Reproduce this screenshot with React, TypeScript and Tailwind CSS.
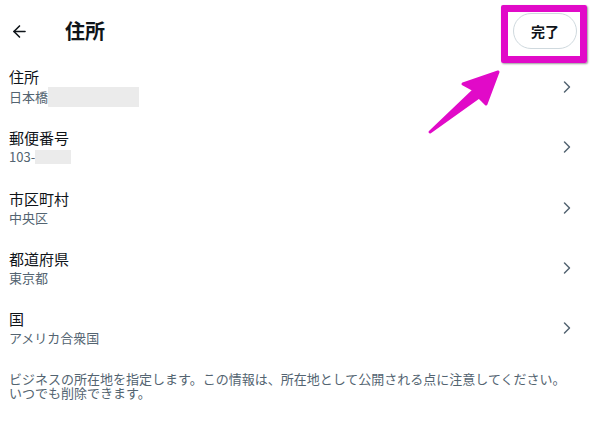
import { ArrowLeft, ChevronRight } from 'lucide-react'

const ROWS: { label: string; value: string; mask?: string }[] = [
  { label: '住所', value: '日本橋', mask: 'w-[91px] h-[20px]' },
  { label: '郵便番号', value: '103-', mask: 'w-[36px] h-[14px]' },
  { label: '市区町村', value: '中央区' },
  { label: '都道府県', value: '東京都' },
  { label: '国', value: 'アメリカ合衆国' },
]

export default function App() {
  return (
    <div
      className="relative h-[425px] w-[592px] overflow-hidden bg-white text-[#0f1419]"
      style={{ fontFamily: '"Noto Sans CJK JP", "Noto Sans", sans-serif' }}
    >
      {/* Header */}
      <div className="flex h-[57px] items-center pt-[5px] pl-[10px] pr-[15px]">
        <ArrowLeft className="h-[19px] w-[19px]" strokeWidth={2} />
        <h1 className="ml-[36px] text-[20px] font-bold leading-6">住所</h1>
        <button className="ml-auto flex h-[36px] w-[64px] items-center justify-center rounded-full border border-[#cfd9de] bg-white text-[14px] font-bold">
          完了
        </button>
      </div>

      {/* Fields */}
      <div className="flex flex-col">
        {ROWS.map((row) => (
          <div key={row.label} className="flex h-[60.25px] items-center justify-between pl-[9px] pr-[15px]">
            <div className="flex flex-col">
              <span className="text-[15px] leading-5">{row.label}</span>
              <span className="flex items-center text-[13px] leading-[18px] text-[#536471]">
                {row.value}
                {row.mask && <span className={`${row.mask} bg-[#ebebeb]`} />}
              </span>
            </div>
            <ChevronRight className="h-[20px] w-[20px] text-[#536471]" strokeWidth={1.75} />
          </div>
        ))}
      </div>

      <p className="mt-[14px] pl-[9px] pr-4 text-[13px] leading-[14px] text-[#536471]">
        ビジネスの所在地を指定します。この情報は、所在地として公開される点に注意してください。いつでも削除できます。
      </p>

      {/* Annotation overlay */}
      <div className="absolute left-[501px] top-[5px] h-[58px] w-[86px] rounded-[2px] border-[7px] border-[#e10ac8] shadow-[1px_1px_2px_rgba(0,0,0,0.4)]" />
      <svg className="absolute left-0 top-0" width="592" height="425" viewBox="0 0 592 425">
        <polygon
          points="430,132 474,90 463,84 498,72 486,104 479,97"
          fill="#e10ac8"
          stroke="#e10ac8"
          strokeWidth="3"
          strokeLinejoin="round"
        />
      </svg>
    </div>
  )
}
